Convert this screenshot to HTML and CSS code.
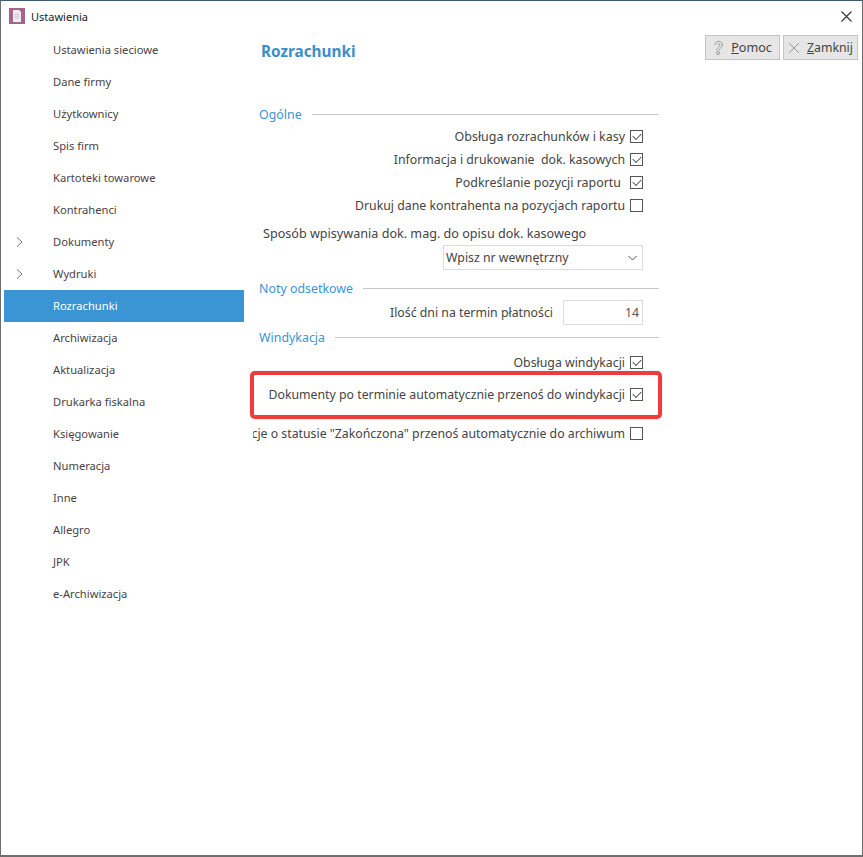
FILE: index.html
```html
<!DOCTYPE html>
<html lang="pl">
<head>
<meta charset="utf-8">
<title>Ustawienia</title>
<link rel="stylesheet" href="styles.css">
</head>
<body>
<div class="window">
  <header class="titlebar">
    <svg class="app-icon" width="16" height="16" viewBox="0 0 16 16"><rect width="16" height="16" fill="#a5648c"/><path d="M4 2h6l2 2v10H4z" fill="#f2eef2"/><path d="M5.500 6h5M5.500 8h5M5.500 10h5" stroke="#c9c4cc" stroke-width="1"/></svg>
    <span class="title">Ustawienia</span>
    <svg class="close" width="11" height="11" viewBox="0 0 11 11"><path d="M.5.500l10 10M10.500.500l-10 10" stroke="#333" stroke-width="1.100" fill="none"/></svg>
  </header>
  <div class="body">
    <nav class="sidebar">
      <div class="nav-item">Ustawienia sieciowe</div>
      <div class="nav-item">Dane firmy</div>
      <div class="nav-item">Użytkownicy</div>
      <div class="nav-item">Spis firm</div>
      <div class="nav-item">Kartoteki towarowe</div>
      <div class="nav-item">Kontrahenci</div>
      <div class="nav-item"><svg class="chev" width="7" height="10" viewBox="0 0 7 10"><path d="M1 .500l5 4.500-5 4.500" stroke="#777" fill="none"/></svg>Dokumenty</div>
      <div class="nav-item"><svg class="chev" width="7" height="10" viewBox="0 0 7 10"><path d="M1 .500l5 4.500-5 4.500" stroke="#777" fill="none"/></svg>Wydruki</div>
      <div class="nav-item active">Rozrachunki</div>
      <div class="nav-item">Archiwizacja</div>
      <div class="nav-item">Aktualizacja</div>
      <div class="nav-item">Drukarka fiskalna</div>
      <div class="nav-item">Księgowanie</div>
      <div class="nav-item">Numeracja</div>
      <div class="nav-item">Inne</div>
      <div class="nav-item">Allegro</div>
      <div class="nav-item">JPK</div>
      <div class="nav-item">e-Archiwizacja</div>
    </nav>
    <main class="form">
      <h1 class="heading">Rozrachunki</h1>

      <div class="section first"><span>Ogólne</span></div>
      <div class="row check-row"><span class="label wide">Obsługa rozrachunków i kasy</span><span class="box on"></span></div>
      <div class="row check-row"><span class="label">Informacja i drukowanie&nbsp; dok. kasowych</span><span class="box on"></span></div>
      <div class="row check-row"><span class="label pad-right wide">Podkreślanie pozycji raportu</span><span class="box on"></span></div>
      <div class="row check-row"><span class="label">Drukuj dane kontrahenta na pozycjach raportu</span><span class="box"></span></div>
      <div class="plain-label">Sposób wpisywania dok. mag. do opisu dok. kasowego</div>
      <div class="row select-row">
        <div class="select"><span>Wpisz nr wewnętrzny</span><svg width="9" height="6" viewBox="0 0 9 6"><path d="M.5 1l4 4 4-4" stroke="#555" fill="none"/></svg></div>
      </div>

      <div class="section notes"><span>Noty odsetkowe</span></div>
      <div class="row input-row"><span class="label">Ilość dni na termin płatności</span><div class="input">14</div></div>

      <div class="section tight"><span>Windykacja</span></div>
      <div class="row check-row first-check"><span class="label">Obsługa windykacji</span><span class="box on"></span></div>
      <div class="row check-row callout"><span class="label">Dokumenty po terminie automatycznie przenoś do windykacji</span><span class="box on"></span><div class="red-box"></div></div>
      <div class="row check-row last-check"><span class="label">Windykacje o statusie "Zakończona" przenoś automatycznie do archiwum</span><span class="box"></span></div>
    </main>
    <aside class="actions">
      <button class="btn"><svg width="11" height="15" viewBox="0 0 11 15"><path d="M2 5c0-5 7.500-5 7.500 0 0 3-3.500 3-3.500 5.500M4.500 5c0-2 2.500-2 2.500 0 0 2-3.500 2.500-3.500 5.500" stroke="#999" fill="none"/><circle cx="5" cy="13" r="1.500" fill="none" stroke="#999"/></svg><span class="btn-help"><u>P</u>omoc</span></button>
      <button class="btn"><svg width="12" height="12" viewBox="0 0 12 12"><path d="M1 1l10 10M11 1L1 11" stroke="#999" fill="none"/></svg><span><u>Z</u>amknij</span></button>
    </aside>
  </div>
</div>
</body>
</html>
```

FILE: styles.css
```css
* { box-sizing: border-box; }
html, body { margin: 0; height: 100%; }
body {
  font-family: "Noto Sans", "Open Sans", sans-serif;
  font-size: 12.3px;
  color: #444;
  background: #fff;
}
.window {
  width: 863px;
  height: 857px;
  display: flex;
  flex-direction: column;
  border-top: 1px solid #3f5a6b;
  border-left: 1px solid #6e6e6e;
  border-right: 1px solid #6e6e6e;
  border-bottom: 2px solid #6e6e6e;
  overflow: hidden;
}
.titlebar {
  height: 32px;
  flex: none;
  display: flex;
  align-items: center;
  padding: 0 10px 2px 8px;
}
.app-icon { margin-right: 6px; }
.title { color: #222; flex: 1; font-size: 11px; }
.body { flex: 1; display: flex; min-height: 0; }
.sidebar { width: 243px; flex: none; padding: 1px 0 0 3px; font-size: 11.2px; }
.nav-item {
  position: relative;
  height: 32px;
  line-height: 31px;
  padding-left: 49px;
  color: #4a3f45;
}
.nav-item.active { background: #3b94d3; color: #fff; }
.chev { position: absolute; left: 12px; top: 11px; }
.form { width: 406px; margin-left: 9px; flex: none; display: flex; flex-direction: column; }
.heading {
  margin: 8px 0 0 8px;
  font-size: 15.3px;
  font-weight: 700;
  line-height: 20px;
  color: #3b8fc9;
}
.section {
  display: flex;
  align-items: center;
  height: 16px;
  margin: 0 0 0 6px;
  color: #3b94d3;
  font-size: 12.4px;
  white-space: nowrap;
}
.section.first { margin-top: 45px; }
.section.notes { margin-top: 10px; }
.section.tight { margin-top: 4px; }
.section::after { content: ""; flex: 1; height: 1px; background: #c8c8c8; margin-left: 10px; }
.row {
  display: flex;
  align-items: center;
  justify-content: flex-end;
  white-space: nowrap;
  padding-right: 16px;
  height: 23px;
  flex: none;
}
.check-row .label { margin-right: 5px; }
.check-row .pad-right { margin-right: 9px; }
.check-row .wide { font-size: 12.45px; }
.section + .check-row { margin-top: 3px; }
.box {
  width: 13px;
  height: 13px;
  flex: none;
  border: 1px solid #555;
  background: #fff;
  position: relative;
}
.box.on::after {
  content: "";
  position: absolute;
  left: 2px;
  top: 0;
  width: 7px;
  height: 4px;
  border-left: 1px solid #555;
  border-bottom: 1px solid #555;
  transform: translateY(2px) rotate(-45deg);
}
.plain-label { margin: 8px 0 0 10px; height: 18px; line-height: 18px; white-space: nowrap; font-size: 12.6px; }
.select-row { height: 25px; margin-top: 2px; }
.select {
  width: 200px;
  height: 25px;
  border: 1px solid #dcdcdc;
  display: flex;
  align-items: center;
  justify-content: space-between;
  padding: 0 5px 0 2px;
}
.input-row { height: 25px; margin-top: 4px; }
.input-row .label { margin-right: 10px; }
.input {
  width: 80px;
  height: 25px;
  border: 1px solid #dcdcdc;
  text-align: right;
  line-height: 23px;
  padding-right: 3px;
  color: #555;
}
.section + .first-check { margin-top: 6px; }
.callout { position: relative; height: 32px; margin-top: 4px; }
.last-check { margin-top: 12px; overflow: hidden; }
.red-box {
  position: absolute;
  left: -3px;
  right: -3px;
  top: -7px;
  height: 48px;
  border: 4px solid #ee3b3b;
  border-radius: 5px;
  box-shadow: 0 0 1px #777;
}
.actions { flex: 1; display: flex; justify-content: flex-end; align-items: flex-start; gap: 3px; padding: 2px 4px 0 0; }
.btn {
  width: 75px;
  height: 25px;
  background: #e6e6e6;
  border: 1px solid #c4c4c4;
  font: inherit;
  color: #444;
  display: flex;
  align-items: center;
  justify-content: center;
  gap: 7px;
  padding: 0;
}
.btn-help { font-size: 12.6px; }
```
